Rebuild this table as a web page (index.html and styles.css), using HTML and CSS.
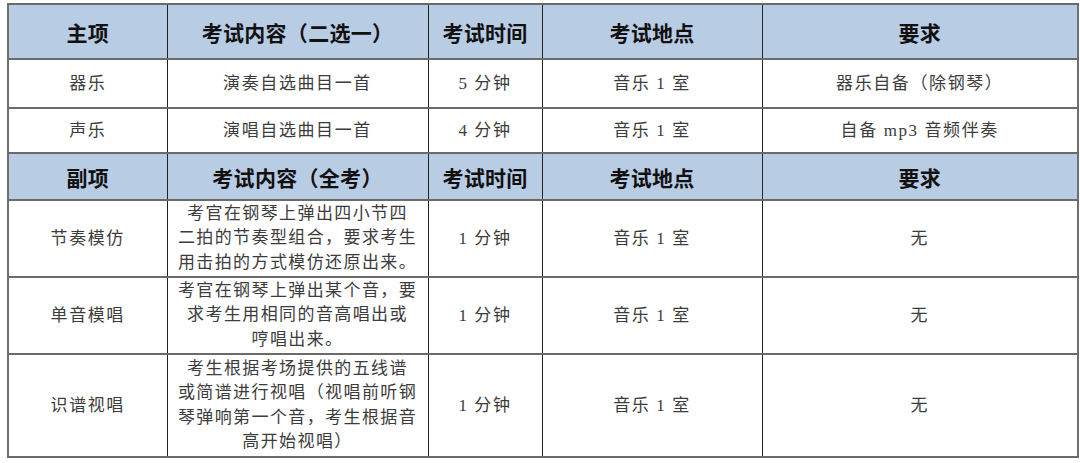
FILE: index.html
```html
<!DOCTYPE html>
<html lang="zh-CN">
<head>
<meta charset="utf-8">
<title>考试安排</title>
<link rel="stylesheet" href="styles.css">
</head>
<body>
<table class="exam">
  <colgroup>
    <col class="c1"><col class="c2"><col class="c3"><col class="c4"><col class="c5">
  </colgroup>
  <tbody>
    <tr class="head h1">
      <th>主项</th><th>考试内容（二选一）</th><th>考试时间</th><th>考试地点</th><th>要求</th>
    </tr>
    <tr class="r1">
      <td>器乐</td><td>演奏自选曲目一首</td><td>5 分钟</td><td>音乐 1 室</td><td>器乐自备（除钢琴）</td>
    </tr>
    <tr class="r2">
      <td>声乐</td><td>演唱自选曲目一首</td><td>4 分钟</td><td>音乐 1 室</td><td>自备 mp3 音频伴奏</td>
    </tr>
    <tr class="head h2">
      <th>副项</th><th>考试内容（全考）</th><th>考试时间</th><th>考试地点</th><th>要求</th>
    </tr>
    <tr class="r3">
      <td>节奏模仿</td><td class="multi">考官在钢琴上弹出四小节四<br>二拍的节奏型组合，要求考生<br>用击拍的方式模仿还原出来。</td><td>1 分钟</td><td>音乐 1 室</td><td>无</td>
    </tr>
    <tr class="r4">
      <td>单音模唱</td><td class="multi">考官在钢琴上弹出某个音，要<br>求考生用相同的音高唱出或<br>哼唱出来。</td><td>1 分钟</td><td>音乐 1 室</td><td>无</td>
    </tr>
    <tr class="r5">
      <td>识谱视唱</td><td class="multi">考生根据考场提供的五线谱<br>或简谱进行视唱（视唱前听钢<br>琴弹响第一个音，考生根据音<br>高开始视唱）</td><td>1 分钟</td><td>音乐 1 室</td><td>无</td>
    </tr>
  </tbody>
</table>
</body>
</html>
```

FILE: styles.css
```css
html, body {
  margin: 0;
  padding: 0;
  background: #ffffff;
}
body {
  padding: 3px 0 0 7px;
  font-family: "Liberation Serif", "Noto Sans CJK SC", serif;
}
.exam {
  border-collapse: collapse;
  table-layout: fixed;
  width: 1070px;
  border: 2px solid #6f6f6f;
}
.c1 { width: 159px; }
.c2 { width: 261px; }
.c3 { width: 114px; }
.c4 { width: 220px; }
.c5 { width: 316px; }

.exam th,
.exam td {
  border-top: 2px solid #6a6a6a;
  border-bottom: 2px solid #6a6a6a;
  border-left: 1px solid #222;
  border-right: 1px solid #222;
  text-align: center;
  vertical-align: middle;
  padding: 0;
  white-space: nowrap;
}
.exam th {
  background: #b8cce4;
  color: #111;
  font-size: 21px;
  font-weight: 700;
  letter-spacing: 0.3px;
}
.exam td {
  color: #3c3c3c;
  font-size: 17px;
  letter-spacing: 1.6px;
  line-height: 24px;
}
.exam td.multi {
  line-height: 24.5px;
  letter-spacing: 1.4px;
}
.h1 { height: 55px; }
.r1 { height: 49px; }
.r2 { height: 45px; }
.h2 { height: 47px; }
.r3 { height: 77px; }
.r4 { height: 77px; }
.r5 { height: 103px; }
```
